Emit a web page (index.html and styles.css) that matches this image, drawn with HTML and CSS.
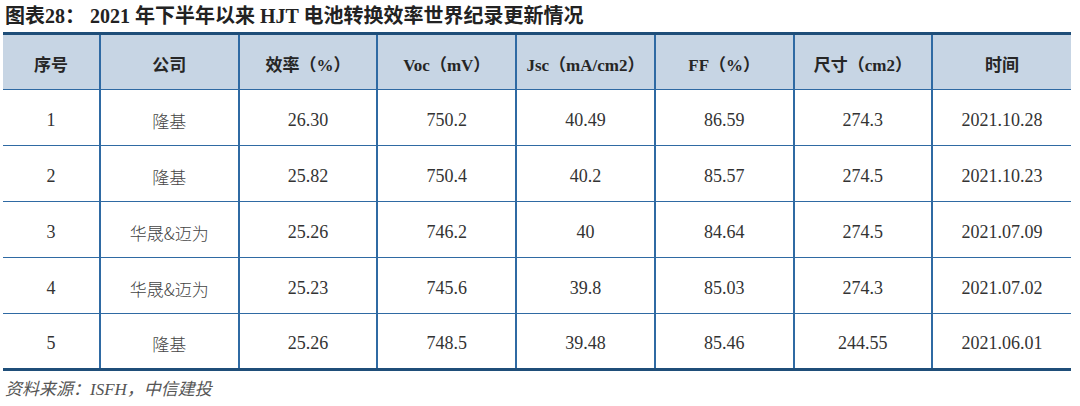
FILE: index.html
```html
<!DOCTYPE html>
<html lang="zh-CN">
<head>
<meta charset="utf-8">
<link rel="stylesheet" href="styles.css">
</head>
<body>
<div class="page">
  <div class="title"><span class="cjk">图表</span>28<span class="cjk">：</span> 2021 <span class="cjk">年下半年以来</span> HJT <span class="cjk">电池转换效率世界纪录更新情况</span></div>
  <table class="data">
    <colgroup>
      <col class="c-first">
      <col class="c"><col class="c"><col class="c"><col class="c"><col class="c"><col class="c"><col class="c">
    </colgroup>
    <thead>
      <tr>
        <th><span class="cjk">序号</span></th>
        <th><span class="cjk">公司</span></th>
        <th><span class="cjk">效率（</span>%<span class="cjk">）</span></th>
        <th>Voc<span class="cjk">（</span>mV<span class="cjk">）</span></th>
        <th>Jsc<span class="cjk">（</span>mA/cm2<span class="cjk">）</span></th>
        <th>FF<span class="cjk">（</span>%<span class="cjk">）</span></th>
        <th><span class="cjk">尺寸（</span>cm2<span class="cjk">）</span></th>
        <th><span class="cjk">时间</span></th>
      </tr>
    </thead>
    <tbody>
      <tr><td>1</td><td class="zh">隆基</td><td>26.30</td><td>750.2</td><td>40.49</td><td>86.59</td><td>274.3</td><td>2021.10.28</td></tr>
      <tr><td>2</td><td class="zh">隆基</td><td>25.82</td><td>750.4</td><td>40.2</td><td>85.57</td><td>274.5</td><td>2021.10.23</td></tr>
      <tr><td>3</td><td class="zh">华晟&amp;迈为</td><td>25.26</td><td>746.2</td><td>40</td><td>84.64</td><td>274.5</td><td>2021.07.09</td></tr>
      <tr><td>4</td><td class="zh">华晟&amp;迈为</td><td>25.23</td><td>745.6</td><td>39.8</td><td>85.03</td><td>274.3</td><td>2021.07.02</td></tr>
      <tr><td>5</td><td class="zh">隆基</td><td>25.26</td><td>748.5</td><td>39.48</td><td>85.46</td><td>244.55</td><td>2021.06.01</td></tr>
    </tbody>
  </table>
  <div class="source">资料来源：ISFH，中信建投</div>
</div>
</body>
</html>
```

FILE: styles.css
```css
html, body {
  margin: 0;
  padding: 0;
  background: #ffffff;
}

body {
  font-family: "Liberation Serif", "Noto Sans CJK SC", serif;
  color: #333333;
  width: 1080px;
  height: 406px;
  overflow: hidden;
}

.page {
  padding-left: 3px;
}

.cjk {
  font-family: "Noto Sans CJK SC", sans-serif;
}

.title {
  height: 32px;
  line-height: 29px;
  padding-left: 2px;
  font-size: 20px;
  font-weight: bold;
  color: #222222;
  white-space: nowrap;
}

.data {
  width: 1068px;
  border-collapse: collapse;
  table-layout: fixed;
  border-top: 3px solid #1f4e79;
  border-bottom: 3px solid #1f4e79;
}

.c-first {
  width: 97px;
}

.data th,
.data td {
  text-align: center;
  vertical-align: middle;
  padding: 0;
  border-left: 2px solid #2f6aa3;
  white-space: nowrap;
}

.data th:first-child,
.data td:first-child {
  border-left: none;
}

.data thead tr {
  height: 56px;
  background: #c7d5e4;
}

.data th {
  font-size: 17px;
  font-weight: bold;
  color: #262626;
  padding-top: 3px;
  border-bottom: 1px solid #2f6aa3;
}

.data tbody tr {
  height: 56px;
}

.data tbody tr + tr td {
  border-top: 1px solid #2f6aa3;
}

.data td {
  font-size: 18px;
  color: #333333;
  padding-top: 5px;
}

.data td.zh {
  font-family: "Noto Sans CJK SC", sans-serif;
  font-size: 17px;
  font-weight: 300;
  color: #444444;
}

.source {
  margin-top: 8px;
  padding-left: 2px;
  font-size: 17px;
  font-style: italic;
  color: #555555;
  line-height: 22px;
}
```
